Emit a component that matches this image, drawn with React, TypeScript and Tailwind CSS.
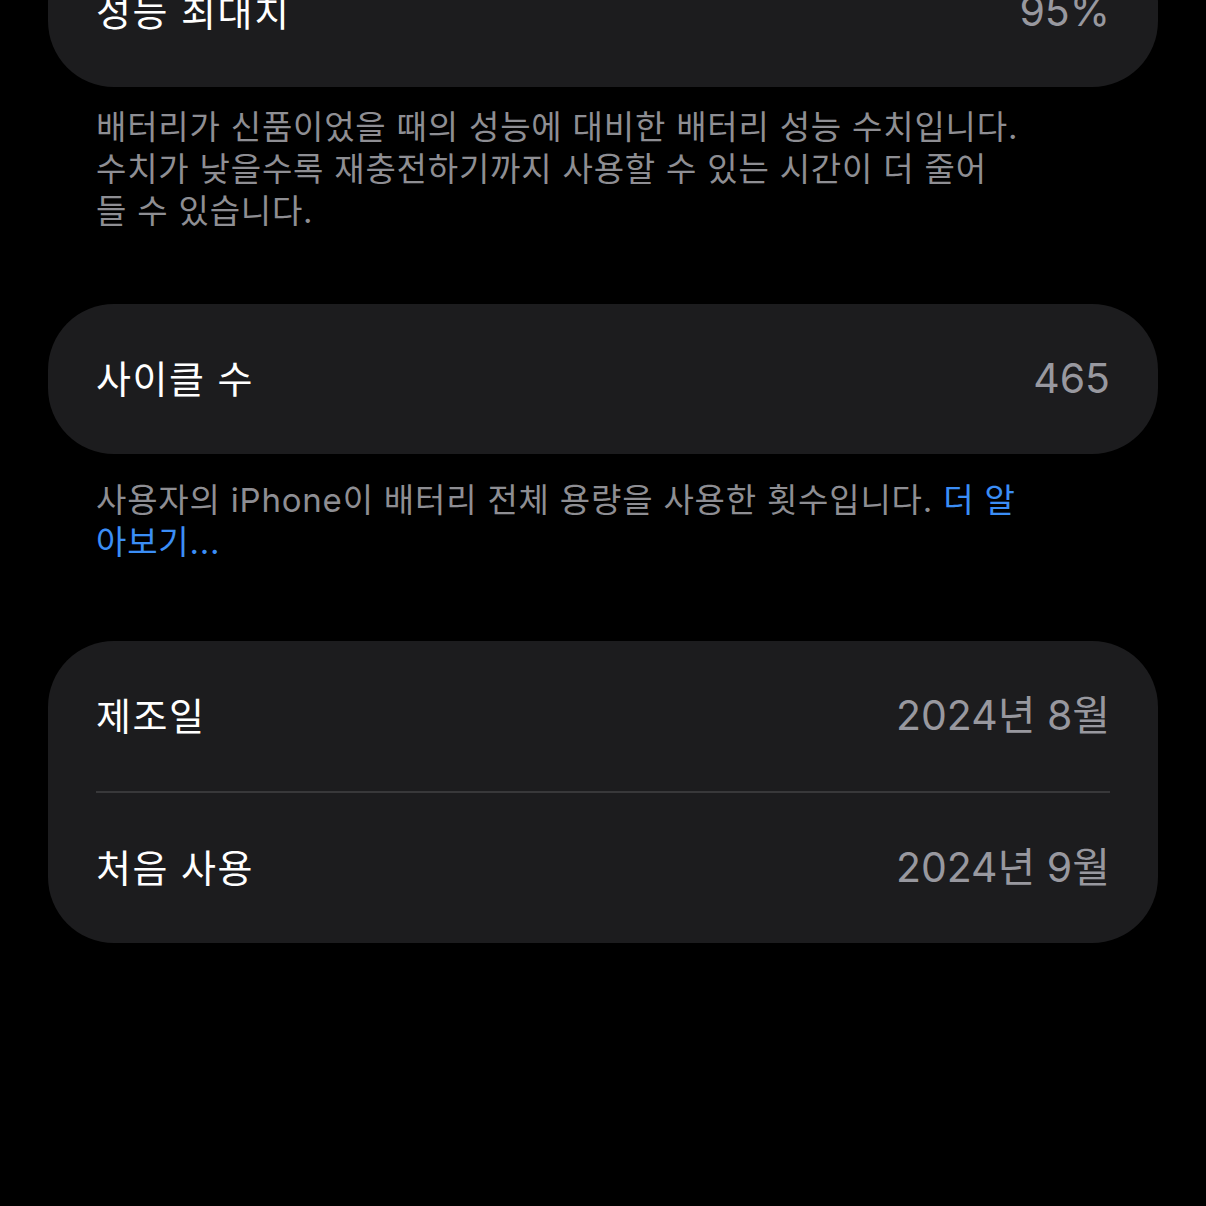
const font = "font-['Inter','Noto_Sans_CJK_KR',sans-serif]";

function Row({ label, value }: { label: string; value: string }) {
  return (
    <div className="flex h-[150px] items-center justify-between px-[48px]">
      <span className="text-[38px] tracking-[1.5px] text-white">{label}</span>
      <span className="text-[41px] text-[#98989f]">{value}</span>
    </div>
  );
}

function Card({ children, className = '' }: { children: React.ReactNode; className?: string }) {
  return (
    <div className={`mx-[48px] overflow-hidden rounded-[66px] bg-[#1c1c1e] ${className}`}>{children}</div>
  );
}

function Footer({ children, className = '' }: { children: React.ReactNode; className?: string }) {
  return (
    <p className={`px-[96px] text-[33px] leading-[42px] tracking-[0.8px] text-[#8e8e93] ${className}`}>
      {children}
    </p>
  );
}

export default function App() {
  return (
    <div className={`h-[1206px] overflow-hidden bg-black ${font}`}>
      <Card className="mt-[-63px]">
        <Row label="성능 최대치" value="95%" />
      </Card>
      <Footer className="mt-[19px]">
        배터리가 신품이었을 때의 성능에 대비한 배터리 성능 수치입니다.
        <br />
        수치가 낮을수록 재충전하기까지 사용할 수 있는 시간이 더 줄어
        <br />
        들 수 있습니다.
      </Footer>

      <Card className="mt-[72px]">
        <Row label="사이클 수" value="465" />
      </Card>
      <Footer className="mt-[25px]">
        사용자의 iPhone이 배터리 전체 용량을 사용한 횟수입니다.{' '}
        <span className="text-[#3b8ef6]">더 알</span>
        <br />
        <span className="text-[#3b8ef6]">아보기...</span>
      </Footer>

      <Card className="mt-[78px]">
        <Row label="제조일" value="2024년 8월" />
        <div className="mx-[48px] h-[2px] bg-[#38383a]" />
        <Row label="처음 사용" value="2024년 9월" />
      </Card>
    </div>
  );
}
